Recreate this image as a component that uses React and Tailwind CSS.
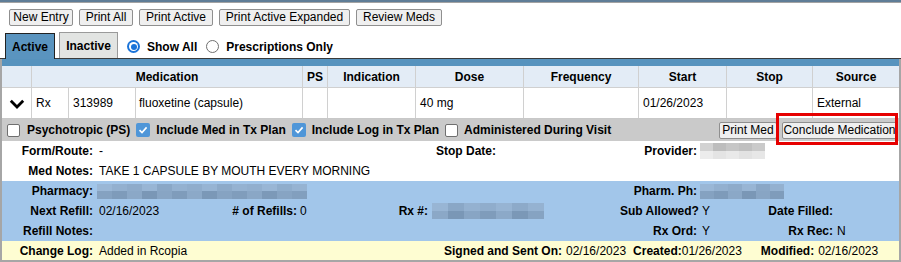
import React from "react";

const blueBlur = [
  ["#9ab7d6", "#93b0cf", "#8eabca", "#98b5d4", "#8aa7c6", "#94b1d0", "#90adcc", "#97b4d3", "#8daac9", "#95b2d1", "#92afce", "#99b6d5", "#8fadcc", "#96b3d2"],
  ["#85a2c1", "#7e9bba", "#8ba8c7", "#7a97b6", "#88a5c4", "#7f9cbb", "#8ca9c8", "#7b98b7", "#86a3c2", "#809dbc", "#8aa7c6", "#7c99b8", "#87a4c3", "#829fbe"],
];
const grayBlur = [
  ["#d2d2d2", "#bdbdbd", "#c6c6c6", "#c0c0c0", "#cacaca"],
  ["#ececec", "#e4e4e4", "#e9e9e9", "#e2e2e2", "#e7e7e7"],
];

function Blur({ cells, palette, h = "h-[15px]", cw = "w-[15px]" }) {
  return (
    <div className={`flex flex-col ${h}`}>
      {palette.map((row, r) => (
        <div key={r} className="flex flex-1">
          {row.slice(0, cells).map((c, i) => (
            <div key={i} className={`${cw} h-full`} style={{ backgroundColor: c }} />
          ))}
        </div>
      ))}
    </div>
  );
}

function Btn({ children, className = "" }) {
  return (
    <button className={`h-[17px] px-0 text-center whitespace-nowrap bg-[#efefef] border border-[#8f8f8f] rounded-[2px] leading-[15px] text-[12px] text-black ${className}`}>
      {children}
    </button>
  );
}

function Box({ checked }) {
  if (checked)
    return (
      <span className="w-[14px] h-[14px] rounded-[2px] bg-[#4f96d8] flex items-center justify-center shrink-0">
        <svg width="10" height="10" viewBox="0 0 10 10">
          <polyline points="1.5,5.2 4,7.6 8.6,2.4" fill="none" stroke="white" strokeWidth="1.6" />
        </svg>
      </span>
    );
  return <span className="w-[13px] h-[13px] rounded-[2px] bg-white border border-[#6f6f6f] shrink-0" />;
}

function Radio({ on }) {
  if (on)
    return (
      <span className="w-[13px] h-[13px] shrink-0 rounded-full bg-[#1a73d8] flex items-center justify-center">
        <span className="w-[9px] h-[9px] rounded-full bg-white flex items-center justify-center">
          <span className="w-[6px] h-[6px] rounded-full bg-[#1a73d8]" />
        </span>
      </span>
    );
  return <span className="w-[13px] h-[13px] shrink-0 rounded-full bg-white border border-[#6f6f6f]" />;
}

const L = "w-[91px] text-right font-bold shrink-0";
const B = "text-right font-bold shrink-0";

export default function App() {
  return (
    <div className="relative w-[901px] h-[262px] overflow-hidden bg-white text-[12px] text-black font-['Liberation_Sans',Arial,sans-serif] leading-none whitespace-nowrap">
      <div className="h-[2px] bg-[#5f7d97]" />
      <div className="h-px bg-[#a3a3a3]" />

      <div className="flex gap-[6px] pl-[9px] mt-[6px]">
        <Btn className="w-[64px]">New Entry</Btn>
        <Btn className="w-[54px]">Print All</Btn>
        <Btn className="w-[74px]">Print Active</Btn>
        <Btn className="w-[131px]">Print Active Expanded</Btn>
        <Btn className="w-[86px]">Review Meds</Btn>
      </div>

      <div className="flex items-end mt-[6px] pl-[5px] border-b border-[#3a3a3a]">
        <div className="w-[50px] h-[26px] -mb-px bg-[#5a94bf] border border-b-0 border-[#222] flex items-center justify-center font-bold">
          Active
        </div>
        <div className="ml-[4px] w-[59px] h-[26px] bg-[#e2e4e2] border border-b-0 border-[#9a9a9a] flex items-center justify-center font-bold">
          Inactive
        </div>
        <div className="flex items-center ml-[9px] mb-[5px] font-bold">
          <Radio on />
          <span className="ml-[7px] mr-[9px]">Show All</span>
          <Radio />
          <span className="ml-[7px]">Prescriptions Only</span>
        </div>
      </div>

      <div className="border-x-2 border-b-2 border-[#a6a6a6]">
        <div className="h-[7px] bg-[#5793be]" />

        <div className="flex h-[22px] bg-[#e3ecf6] border-b border-[#d0d0d0] font-bold">
          <div className="w-[30px] border-r border-[#d0d0d0]" />
          <div className="w-[271px] border-r border-[#d0d0d0] flex items-center justify-center">Medication</div>
          <div className="w-[25px] border-r border-[#d0d0d0] flex items-center justify-center">PS</div>
          <div className="w-[88px] border-r border-[#d0d0d0] flex items-center justify-center">Indication</div>
          <div className="w-[108px] border-r border-[#d0d0d0] flex items-center justify-center">Dose</div>
          <div className="w-[115px] border-r border-[#d0d0d0] flex items-center justify-center">Frequency</div>
          <div className="w-[88px] border-r border-[#d0d0d0] flex items-center justify-center">Start</div>
          <div className="w-[86px] border-r border-[#d0d0d0] flex items-center justify-center">Stop</div>
          <div className="flex-1 flex items-center justify-center">Source</div>
        </div>

        <div className="flex h-[31px] border-b border-[#c8c8c8]">
          <div className="w-[30px] border-r border-[#d0d0d0] flex items-center justify-center pt-[1px]">
            <svg width="16" height="10" viewBox="0 0 16 10">
              <polyline points="1.8,1.8 8,8 14.2,1.8" fill="none" stroke="black" strokeWidth="2.8" />
            </svg>
          </div>
          <div className="w-[37px] border-r border-[#d0d0d0] flex items-center pl-[4px]">Rx</div>
          <div className="w-[67px] border-r border-[#d0d0d0] flex items-center pl-[4px]">313989</div>
          <div className="w-[167px] border-r border-[#d0d0d0] flex items-center pl-[3px]">fluoxetine (capsule)</div>
          <div className="w-[25px] border-r border-[#d0d0d0]" />
          <div className="w-[88px] border-r border-[#d0d0d0]" />
          <div className="w-[108px] border-r border-[#d0d0d0] flex items-center pl-[4px]">40 mg</div>
          <div className="w-[115px] border-r border-[#d0d0d0]" />
          <div className="w-[88px] border-r border-[#d0d0d0] flex items-center pl-[4px]">01/26/2023</div>
          <div className="w-[86px] border-r border-[#d0d0d0]" />
          <div className="flex-1 flex items-center pl-[4px]">External</div>
        </div>

        <div className="flex items-center h-[22px] bg-[#cacaca] pl-[5px] pr-[2px] font-bold">
          <Box />
          <span className="ml-[7px] mr-[6px]">Psychotropic (PS)</span>
          <Box checked />
          <span className="ml-[6px] mr-[6px]">Include Med in Tx Plan</span>
          <Box checked />
          <span className="ml-[6px] mr-[6px]">Include Log in Tx Plan</span>
          <Box />
          <span className="ml-[6px]">Administered During Visit</span>
          <div className="ml-auto flex gap-[5px]">
            <Btn className="w-[58px] font-normal">Print Med</Btn>
            <Btn className="w-[115px] font-normal">Conclude Medication</Btn>
          </div>
        </div>

        <div className="bg-white">
          <div className="flex items-center h-[20px]">
            <span className={L}>Form/Route:</span>
            <span className="w-[343px] pl-[6px]">-</span>
            <span className="w-[184px] font-bold">Stop Date:</span>
            <span className={`w-[77px] ${B}`}>Provider:</span>
            <span className="ml-[3px]"><Blur cells={5} palette={grayBlur} h="h-[16px]" cw="w-[13px]" /></span>
          </div>
          <div className="flex items-center h-[20px]">
            <span className={L}>Med Notes:</span>
            <span className="pl-[6px]">TAKE 1 CAPSULE BY MOUTH EVERY MORNING</span>
          </div>
        </div>

        <div className="bg-[#a2c6ea]">
          <div className="flex items-center h-[20px]">
            <span className={L}>Pharmacy:</span>
            <span className="w-[527px] pl-[4px]"><Blur cells={14} palette={blueBlur} /></span>
            <span className={`w-[77px] ${B}`}>Pharm. Ph:</span>
            <span className="ml-[3px]"><Blur cells={6} palette={blueBlur} cw="w-[14px]" /></span>
          </div>
          <div className="flex items-center h-[20px]">
            <span className={L}>Next Refill:</span>
            <span className="w-[124px] pl-[6px]">02/16/2023</span>
            <span className={`w-[80px] ${B}`}># of Refills:</span>
            <span className="w-[83px] pl-[3px]">0</span>
            <span className={`w-[48px] ${B}`}>Rx #:</span>
            <span className="w-[192px] pl-[4px]">
              <Blur cells={7} palette={[blueBlur[0].slice(3), blueBlur[1].slice(2)]} h="h-[16px]" cw="w-[16px]" />
            </span>
            <span className={`w-[77px] ${B}`}>Sub Allowed?</span>
            <span className="w-[63px] pl-[5px]">Y</span>
            <span className={`w-[73px] ${B}`}>Date Filled:</span>
          </div>
          <div className="flex items-center h-[20px]">
            <span className={L}>Refill Notes:</span>
            <span className="w-[527px]" />
            <span className={`w-[77px] ${B}`}>Rx Ord:</span>
            <span className="w-[63px] pl-[5px]">Y</span>
            <span className={`w-[73px] ${B}`}>Rx Rec:</span>
            <span className="pl-[4px]">N</span>
          </div>
        </div>

        <div className="flex items-center h-[19px] bg-[#fefdd2]">
          <span className={L}>Change Log:</span>
          <span className="w-[351px] pl-[6px]">Added in Rcopia</span>
          <span className="font-bold">Signed and Sent On:</span>
          <span className="ml-[4px]">02/16/2023</span>
          <span className="ml-[7px] font-bold">Created:</span>
          <span>01/26/2023</span>
          <span className="ml-[19px] font-bold">Modified:</span>
          <span className="ml-[4px]">02/16/2023</span>
        </div>
      </div>

      <div className="absolute left-[776px] top-[113px] w-[122px] h-[32px] border-[3px] border-[#e60000]" />
    </div>
  );
}
